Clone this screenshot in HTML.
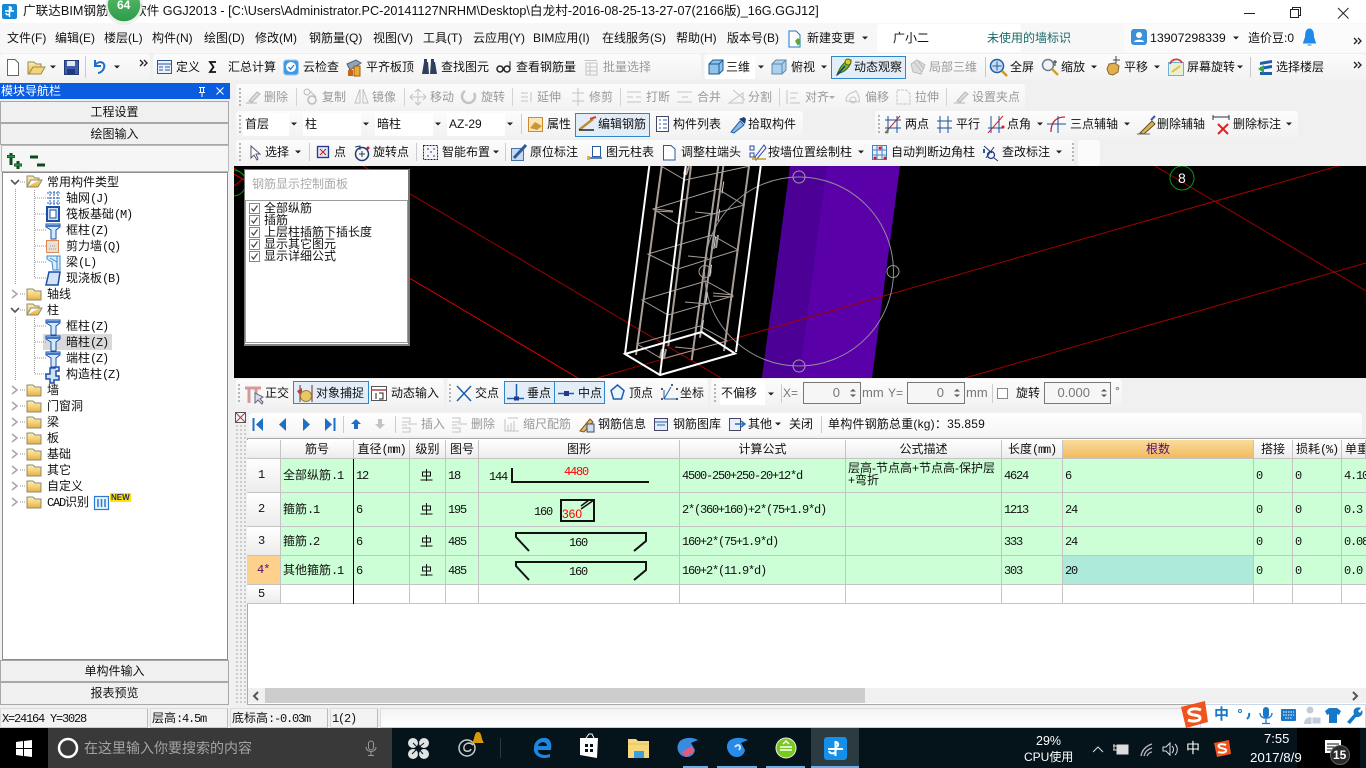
<!DOCTYPE html>
<html lang="zh"><head><meta charset="utf-8"><title>GGJ2013</title>
<style>
html,body{margin:0;padding:0;width:1366px;height:768px;overflow:hidden;background:#f0f0f0}
body{position:relative;font:12px/16px "Liberation Sans","Noto Sans CJK SC",sans-serif;color:#111}
div,i,svg{position:absolute}
i{font-style:normal;white-space:nowrap;height:16px;line-height:16px}
i b,.h b,.d b,.st b{font:12px/16px "Liberation Mono",monospace;letter-spacing:-1.2px}
.bar{background:linear-gradient(#fcfcfc,#f2f2f2);border-radius:3px}
.sel{background:#e2edf8;border:1px solid #2f86c8;box-sizing:border-box}
.cb{background:#fff}
.g{color:#9a9a9a}
.q,.h,.d,.st,.k{font-family:"Liberation Sans","WenQuanYi Zen Hei","Noto Sans CJK SC",sans-serif}
.btn{left:0;width:229px;height:22px;box-sizing:border-box;border:1px solid #a8a8a8;background:#f0f0f0;text-align:center;line-height:21px}
.r0{top:30px}.r1{top:59px}.r2{top:89px}.r3{top:116px}.r4{top:144px}.r5{top:385px}.r6{top:416px}
.c{left:0;top:0}
.h{top:440px;height:19px;box-sizing:border-box;background:linear-gradient(#fff,#ececec);border-right:1px solid #c4c4c4;border-bottom:1px solid #c4c4c4;text-align:center;line-height:19px}
.k{left:247px;width:34px;box-sizing:border-box;background:linear-gradient(#fff,#ececec);border-right:1px solid #c4c4c4;border-bottom:1px solid #c4c4c4;padding-left:11px;font:12px "Liberation Mono",monospace;letter-spacing:-1px}
.d{box-sizing:border-box;background:#ccffd6;border-right:1px solid #c4c4c4;border-bottom:1px solid #c4c4c4;padding-left:2px;white-space:nowrap}
.w{background:#fff}
.sp{top:382px;height:22px;box-sizing:border-box;border:1px solid #777;background:#f6f6f6;color:#777;text-align:right;line-height:20px;padding-right:20px;font-size:13px}
.st{top:708px;height:20px;box-sizing:border-box;background:#f3f3f3;border:1px solid #dcdcdc;border-right-color:#bbb;border-bottom-color:#ccc;line-height:18px;padding-left:1px;white-space:nowrap}
.st b{line-height:18px}
.cp{left:264px;height:12px;line-height:12px;font-size:12px}
</style></head><body>

<!-- title -->
<div style="left:0;top:0;width:1366px;height:23px;background:#fff"></div>
<i style="left:23px;top:3px;font-size:12.65px">广联达BIM钢筋算量软件 GGJ2013 - [C:\Users\Administrator.PC-20141127NRHM\Desktop\白龙村-2016-08-25-13-27-07(2166版)_16G.GGJ12]</i>

<!-- menu -->
<div style="left:0;top:23px;width:1366px;height:30px;background:#f7f7f7"></div>
<div style="left:877px;top:24px;width:144px;height:28px;background:#fff;border-radius:3px"></div>
<div style="left:1124px;top:24px;width:242px;height:28px;background:#fbfbfb;border-radius:3px"></div>
<i class="r0" style="left:7px">文件(F)</i><i class="r0" style="left:55px">编辑(E)</i><i class="r0" style="left:104px">楼层(L)</i><i class="r0" style="left:152px">构件(N)</i><i class="r0" style="left:204px">绘图(D)</i><i class="r0" style="left:255px">修改(M)</i><i class="r0" style="left:309px">钢筋量(Q)</i><i class="r0" style="left:373px">视图(V)</i><i class="r0" style="left:423px">工具(T)</i><i class="r0" style="left:473px">云应用(Y)</i><i class="r0" style="left:533px">BIM应用(I)</i><i class="r0" style="left:602px">在线服务(S)</i><i class="r0" style="left:676px">帮助(H)</i><i class="r0" style="left:727px">版本号(B)</i><i class="r0" style="left:807px">新建变更</i><i class="r0" style="left:893px">广小二</i><i class="r0" style="left:987px;color:#1a6a6a">未使用的墙标识</i><i class="r0" style="left:1150px;font-size:12.4px">13907298339</i><i class="r0" style="left:1248px">造价豆:0</i>

<!-- toolbars bg -->
<div class="bar" style="left:0;top:54px;width:150px;height:26px"></div>
<div class="bar" style="left:153px;top:54px;width:548px;height:26px"></div>
<div class="bar" style="left:704px;top:54px;width:662px;height:26px"></div>
<div class="cb" style="left:705px;top:56px;width:50px;height:23px"></div>
<div class="sel" style="left:831px;top:56px;width:75px;height:23px"></div>
<i class="r1" style="left:176px">定义</i><i class="r1" style="left:228px">汇总计算</i><i class="r1" style="left:303px">云检查</i><i class="r1" style="left:366px">平齐板顶</i><i class="r1" style="left:441px">查找图元</i><i class="r1" style="left:516px">查看钢筋量</i><i class="r1 g" style="left:603px">批量选择</i><i class="r1" style="left:726px">三维</i><i class="r1" style="left:791px">俯视</i><i class="r1" style="left:854px">动态观察</i><i class="r1 g" style="left:929px">局部三维</i><i class="r1" style="left:1010px">全屏</i><i class="r1" style="left:1061px">缩放</i><i class="r1" style="left:1124px">平移</i><i class="r1" style="left:1187px">屏幕旋转</i><i class="r1" style="left:1276px">选择楼层</i>

<!-- nav panel -->
<div style="left:0;top:83px;width:230px;height:16px;background:#0a5de0"></div>
<i style="left:1px;top:83px;color:#fff">模块导航栏</i>
<div class="btn" style="top:101px">工程设置</div>
<div class="btn" style="top:123px">绘图输入</div>
<div style="left:1px;top:145px;width:228px;height:27px;background:#f6f6f6;border:1px solid #bbb;box-sizing:border-box"></div>
<div style="left:2px;top:172px;width:226px;height:488px;background:#fff;border:1px solid #8c8c8c;box-sizing:border-box"></div>
<div style="left:43px;top:334px;width:69px;height:16px;background:#d9d9d9"></div>
<div class="q" style="left:0;top:0">
<i style="left:47px;top:174px">常用构件类型</i>
<i style="left:66px;top:190px">轴网<b>(J)</b></i>
<i style="left:66px;top:206px">筏板基础<b>(M)</b></i>
<i style="left:66px;top:222px">框柱<b>(Z)</b></i>
<i style="left:66px;top:238px">剪力墙<b>(Q)</b></i>
<i style="left:66px;top:254px">梁<b>(L)</b></i>
<i style="left:66px;top:270px">现浇板<b>(B)</b></i>
<i style="left:47px;top:286px">轴线</i>
<i style="left:47px;top:302px">柱</i>
<i style="left:66px;top:318px">框柱<b>(Z)</b></i>
<i style="left:66px;top:334px">暗柱<b>(Z)</b></i>
<i style="left:66px;top:350px">端柱<b>(Z)</b></i>
<i style="left:66px;top:366px">构造柱<b>(Z)</b></i>
<i style="left:47px;top:382px">墙</i><i style="left:47px;top:398px">门窗洞</i><i style="left:47px;top:414px">梁</i><i style="left:47px;top:430px">板</i><i style="left:47px;top:446px">基础</i><i style="left:47px;top:462px">其它</i><i style="left:47px;top:478px">自定义</i>
<i style="left:47px;top:494px"><b>CAD</b>识别</i>
</div>
<div class="btn" style="top:660px">单构件输入</div>
<div class="btn" style="top:682px;height:23px">报表预览</div>

<!-- edit bars -->
<div class="bar" style="left:236px;top:84px;width:789px;height:26px"></div>
<i class="r2 g" style="left:264px">删除</i><i class="r2 g" style="left:322px">复制</i><i class="r2 g" style="left:372px">镜像</i><i class="r2 g" style="left:430px">移动</i><i class="r2 g" style="left:481px">旋转</i><i class="r2 g" style="left:537px">延伸</i><i class="r2 g" style="left:589px">修剪</i><i class="r2 g" style="left:646px">打断</i><i class="r2 g" style="left:697px">合并</i><i class="r2 g" style="left:748px">分割</i><i class="r2 g" style="left:805px">对齐</i><i class="r2 g" style="left:865px">偏移</i><i class="r2 g" style="left:915px">拉伸</i><i class="r2 g" style="left:972px">设置夹点</i>

<div class="bar" style="left:236px;top:111px;width:567px;height:27px"></div>
<div class="bar" style="left:875px;top:111px;width:423px;height:27px"></div>
<div class="cb" style="left:243px;top:113px;width:46px;height:23px"></div>
<div class="cb" style="left:303px;top:113px;width:58px;height:23px"></div>
<div class="cb" style="left:375px;top:113px;width:58px;height:23px"></div>
<div class="cb" style="left:447px;top:113px;width:58px;height:23px"></div>
<div class="sel" style="left:575px;top:113px;width:75px;height:24px"></div>
<i class="r3" style="left:245px">首层</i><i class="r3" style="left:305px">柱</i><i class="r3" style="left:377px">暗柱</i><i class="r3" style="left:449px">AZ-29</i><i class="r3" style="left:547px">属性</i><i class="r3" style="left:598px">编辑钢筋</i><i class="r3" style="left:673px">构件列表</i><i class="r3" style="left:748px">拾取构件</i><i class="r3" style="left:905px">两点</i><i class="r3" style="left:956px">平行</i><i class="r3" style="left:1007px">点角</i><i class="r3" style="left:1070px">三点辅轴</i><i class="r3" style="left:1157px">删除辅轴</i><i class="r3" style="left:1233px">删除标注</i>

<div class="bar" style="left:236px;top:140px;width:838px;height:26px"></div>
<div class="bar" style="left:1078px;top:140px;width:22px;height:26px;background:#fbfbfb"></div>
<i class="r4" style="left:265px">选择</i><i class="r4" style="left:334px">点</i><i class="r4" style="left:373px">旋转点</i><i class="r4" style="left:442px">智能布置</i><i class="r4" style="left:530px">原位标注</i><i class="r4" style="left:606px">图元柱表</i><i class="r4" style="left:681px">调整柱端头</i><i class="r4" style="left:768px">按墙位置绘制柱</i><i class="r4" style="left:891px">自动判断边角柱</i><i class="r4" style="left:1002px">查改标注</i>

<!-- canvas -->
<div style="left:234px;top:166px;width:1132px;height:212px;background:#000;overflow:hidden">
<svg class="c" width="1132" height="212" viewBox="234 166 1132 212" fill="none">
<polygon points="790,166 900,166 872,378 762,378" fill="#5a00a8"/>
<polygon points="790,166 827,166 799,378 762,378" fill="#4c0096"/>
<g stroke="#e00000"><path d="M234 174L578 378"/></g>
<g stroke="#a00000"><path d="M363 166L721 378M597 378L1366 158M965 378L1366 263M1155 166L1366 291"/></g>
<path d="M234 168L244 175M234 186L244 178" stroke="#c00000"/>
<circle cx="233" cy="183" r="13" stroke="#0a9a0a"/>
<circle cx="1182" cy="178" r="12" stroke="#0a9a0a"/>
<circle cx="799" cy="271.5" r="94.5" stroke="#8f8f94"/>
<g stroke="#9a9a9e"><circle cx="799" cy="177" r="6"/><circle cx="893" cy="271.5" r="6"/><circle cx="799" cy="366" r="6"/><circle cx="705" cy="271.5" r="6"/></g>
<g stroke="#a89f98" stroke-width="1">
<path d="M661 166L685 180L750 166"/>
<path d="M653 209L678 224L744 205L718 189Z"/>
<path d="M648 254L678 269L738 250L712 235Z"/>
<path d="M642 300L668 315L733 296L706 281Z"/>
<path d="M637 344L662 359L727 341L700 326Z"/>
<path d="M655 209L673 211M655 211L673 212M695 212L715 214M688 256L708 258M685 302L708 304M713 293L733 295M713 296L733 297M675 347L695 349"/>
</g>
<g stroke="#a89f98" stroke-width="2">
<path d="M636 355L661.7 166M668.3 346L691 166M691.7 360L718.3 166M700 337.700L723.3 166M724 351L749 166"/>
<path d="M660 358L662 349M664 358L666 349M684 174L686 166M686 175L689 166M712 248L714 235M716 248L718 235"/>
</g>
<g stroke="#fff" stroke-width="2">
<path d="M625 354L660 375L735 353.500L701.700 332Z"/>
<path d="M625 354L649.300 166M660 375L685.700 166M736 352L760.700 166"/>
</g>
<path d="M701.700 332L726 166" stroke="#d8d8d8" stroke-width="1" stroke-dasharray="12 16"/>
</svg>
<i style="left:944px;top:4px;color:#fff;font-size:14px;height:16px">8</i>
</div>

<!-- rebar panel -->
<div style="left:244px;top:169px;width:166px;height:177px;background:#fff;border:1px solid #777;border-bottom:2px solid #888;border-right-width:2px;box-sizing:border-box"></div>
<i class="g" style="left:252px;top:176px;color:#aaa">钢筋显示控制面板</i>
<div style="left:245px;top:200px;width:163px;height:143px;border:1px solid #9c9c9c;box-sizing:border-box"></div>
<i class="cp" style="top:202px">全部纵筋</i><i class="cp" style="top:214px">插筋</i><i class="cp" style="top:226px">上层柱插筋下插长度</i><i class="cp" style="top:238px">显示其它图元</i><i class="cp" style="top:250px">显示详细公式</i>

<!-- snap bar -->
<div class="bar" style="left:236px;top:379px;width:208px;height:28px"></div>
<div class="bar" style="left:447px;top:379px;width:261px;height:28px"></div>
<div class="bar" style="left:711px;top:379px;width:411px;height:28px"></div>
<div class="sel" style="left:293px;top:381px;width:76px;height:23px"></div>
<div class="sel" style="left:504px;top:381px;width:51px;height:23px"></div>
<div class="sel" style="left:554px;top:381px;width:51px;height:23px"></div>
<div class="cb" style="left:720px;top:381px;width:45px;height:24px"></div>
<i class="r5" style="left:265px">正交</i><i class="r5" style="left:316px">对象捕捉</i><i class="r5" style="left:391px">动态输入</i><i class="r5" style="left:475px">交点</i><i class="r5" style="left:527px">垂点</i><i class="r5" style="left:578px">中点</i><i class="r5" style="left:629px">顶点</i><i class="r5" style="left:680px">坐标</i><i class="r5" style="left:721px">不偏移</i>
<i class="r5 g" style="left:783px;color:#777">X=</i><i class="r5 g" style="left:862px;color:#777;font-size:13px">mm</i><i class="r5 g" style="left:888px;color:#777">Y=</i><i class="r5 g" style="left:966px;color:#777;font-size:13px">mm</i><i class="r5" style="left:1016px">旋转</i><i class="r5" style="left:1115px;top:383px;color:#555">°</i>
<div class="sp" style="left:803px;width:58px">0</div><div class="sp" style="left:907px;width:58px">0</div><div class="sp" style="left:1044px;width:67px">0.000</div>

<!-- grid toolbar -->
<div style="left:234px;top:411px;width:13px;height:294px;background:#f0f0f0;background-image:radial-gradient(#c9c9c9 1px,transparent 1.2px);background-size:4px 4px;background-position:1px 1px"></div>
<div class="bar" style="left:249px;top:413px;width:1113px;height:23px;background:linear-gradient(#fefefe,#f6f6f6)"></div>
<i class="r6 g" style="left:421px">插入</i><i class="r6 g" style="left:471px">删除</i><i class="r6 g" style="left:523px">缩尺配筋</i><i class="r6" style="left:598px">钢筋信息</i><i class="r6" style="left:673px">钢筋图库</i><i class="r6" style="left:748px">其他</i><i class="r6" style="left:789px">关闭</i><i class="r6" style="left:828px;letter-spacing:.2px">单构件钢筋总重(kg)：35.859</i>

<!-- grid -->
<div style="left:247px;top:438px;width:1119px;height:267px;background:#fff;border:1px solid #a8a8a8;border-right:0;box-sizing:border-box"></div>
<div class="h" style="left:247px;width:34px"></div>
<div class="h" style="left:281px;width:73px">筋号</div>
<div class="h" style="left:354px;width:56px">直径<b>(mm)</b></div>
<div class="h" style="left:410px;width:36px">级别</div>
<div class="h" style="left:446px;width:33px">图号</div>
<div class="h" style="left:479px;width:201px">图形</div>
<div class="h" style="left:680px;width:166px">计算公式</div>
<div class="h" style="left:846px;width:156px">公式描述</div>
<div class="h" style="left:1002px;width:61px">长度<b>(mm)</b></div>
<div class="h" style="left:1063px;width:191px;background:linear-gradient(#fadb9f,#f1bb5c);color:#5a0a70">根数</div>
<div class="h" style="left:1254px;width:39px">搭接</div>
<div class="h" style="left:1293px;width:49px">损耗<b>(%)</b></div>
<div class="h" style="left:1342px;width:24px;text-align:left;padding-left:3px;overflow:hidden;white-space:nowrap">单重</div>

<div class="k" style="top:459px;height:34px;line-height:33px">1</div>
<div class="d" style="left:281px;top:459px;width:73px;height:34px;line-height:33px">全部纵筋<b>.1</b></div>
<div class="d" style="left:354px;top:459px;width:56px;height:34px;line-height:33px"><b>12</b></div>
<div class="d" style="left:410px;top:459px;width:36px;height:34px"></div>
<div class="d" style="left:446px;top:459px;width:33px;height:34px;line-height:33px"><b>18</b></div>
<div class="d" style="left:479px;top:459px;width:201px;height:34px"></div>
<div class="d" style="left:680px;top:459px;width:166px;height:34px;line-height:33px"><b>4500-250+250-20+12*d</b></div>
<div class="d" style="left:846px;top:459px;width:156px;height:34px;line-height:12px;white-space:normal;padding-top:3px">层高-节点高+节点高-保护层+弯折</div>
<div class="d" style="left:1002px;top:459px;width:61px;height:34px;line-height:33px"><b>4624</b></div>
<div class="d" style="left:1063px;top:459px;width:191px;height:34px;line-height:33px"><b>6</b></div>
<div class="d" style="left:1254px;top:459px;width:39px;height:34px;line-height:33px"><b>0</b></div>
<div class="d" style="left:1293px;top:459px;width:49px;height:34px;line-height:33px"><b>0</b></div>
<div class="d" style="left:1342px;top:459px;width:24px;height:34px;line-height:33px;overflow:hidden;border-right:0"><b>4.10</b></div>

<div class="k" style="top:493px;height:34px;line-height:33px">2</div>
<div class="d" style="left:281px;top:493px;width:73px;height:34px;line-height:33px">箍筋<b>.1</b></div>
<div class="d" style="left:354px;top:493px;width:56px;height:34px;line-height:33px"><b>6</b></div>
<div class="d" style="left:410px;top:493px;width:36px;height:34px"></div>
<div class="d" style="left:446px;top:493px;width:33px;height:34px;line-height:33px"><b>195</b></div>
<div class="d" style="left:479px;top:493px;width:201px;height:34px"></div>
<div class="d" style="left:680px;top:493px;width:166px;height:34px;line-height:33px"><b>2*(360+160)+2*(75+1.9*d)</b></div>
<div class="d" style="left:846px;top:493px;width:156px;height:34px"></div>
<div class="d" style="left:1002px;top:493px;width:61px;height:34px;line-height:33px"><b>1213</b></div>
<div class="d" style="left:1063px;top:493px;width:191px;height:34px;line-height:33px"><b>24</b></div>
<div class="d" style="left:1254px;top:493px;width:39px;height:34px;line-height:33px"><b>0</b></div>
<div class="d" style="left:1293px;top:493px;width:49px;height:34px;line-height:33px"><b>0</b></div>
<div class="d" style="left:1342px;top:493px;width:24px;height:34px;line-height:33px;overflow:hidden;border-right:0"><b>0.3</b></div>

<div class="k" style="top:527px;height:29px;line-height:28px">3</div>
<div class="d" style="left:281px;top:527px;width:73px;height:29px;line-height:28px">箍筋<b>.2</b></div>
<div class="d" style="left:354px;top:527px;width:56px;height:29px;line-height:28px"><b>6</b></div>
<div class="d" style="left:410px;top:527px;width:36px;height:29px"></div>
<div class="d" style="left:446px;top:527px;width:33px;height:29px;line-height:28px"><b>485</b></div>
<div class="d" style="left:479px;top:527px;width:201px;height:29px"></div>
<div class="d" style="left:680px;top:527px;width:166px;height:29px;line-height:28px"><b>160+2*(75+1.9*d)</b></div>
<div class="d" style="left:846px;top:527px;width:156px;height:29px"></div>
<div class="d" style="left:1002px;top:527px;width:61px;height:29px;line-height:28px"><b>333</b></div>
<div class="d" style="left:1063px;top:527px;width:191px;height:29px;line-height:28px"><b>24</b></div>
<div class="d" style="left:1254px;top:527px;width:39px;height:29px;line-height:28px"><b>0</b></div>
<div class="d" style="left:1293px;top:527px;width:49px;height:29px;line-height:28px"><b>0</b></div>
<div class="d" style="left:1342px;top:527px;width:24px;height:29px;line-height:28px;overflow:hidden;border-right:0"><b>0.08</b></div>

<div class="k" style="top:556px;height:29px;line-height:28px;background:#fdd08c;color:#5a0a70;padding-left:10px">4*</div>
<div class="d" style="left:281px;top:556px;width:73px;height:29px;line-height:28px">其他箍筋<b>.1</b></div>
<div class="d" style="left:354px;top:556px;width:56px;height:29px;line-height:28px"><b>6</b></div>
<div class="d" style="left:410px;top:556px;width:36px;height:29px"></div>
<div class="d" style="left:446px;top:556px;width:33px;height:29px;line-height:28px"><b>485</b></div>
<div class="d" style="left:479px;top:556px;width:201px;height:29px"></div>
<div class="d" style="left:680px;top:556px;width:166px;height:29px;line-height:28px"><b>160+2*(11.9*d)</b></div>
<div class="d" style="left:846px;top:556px;width:156px;height:29px"></div>
<div class="d" style="left:1002px;top:556px;width:61px;height:29px;line-height:28px"><b>303</b></div>
<div class="d" style="left:1063px;top:556px;width:191px;height:29px;line-height:28px;background:#aeeada"><b>20</b></div>
<div class="d" style="left:1254px;top:556px;width:39px;height:29px;line-height:28px"><b>0</b></div>
<div class="d" style="left:1293px;top:556px;width:49px;height:29px;line-height:28px"><b>0</b></div>
<div class="d" style="left:1342px;top:556px;width:24px;height:29px;line-height:28px;overflow:hidden;border-right:0"><b>0.0</b></div>

<div class="k" style="top:585px;height:19px;line-height:18px">5</div>
<div class="d w" style="left:281px;top:585px;width:73px;height:19px"></div><div class="d w" style="left:354px;top:585px;width:56px;height:19px"></div><div class="d w" style="left:410px;top:585px;width:36px;height:19px"></div><div class="d w" style="left:446px;top:585px;width:33px;height:19px"></div><div class="d w" style="left:479px;top:585px;width:201px;height:19px"></div><div class="d w" style="left:680px;top:585px;width:166px;height:19px"></div><div class="d w" style="left:846px;top:585px;width:156px;height:19px"></div><div class="d w" style="left:1002px;top:585px;width:61px;height:19px"></div><div class="d w" style="left:1063px;top:585px;width:191px;height:19px"></div><div class="d w" style="left:1254px;top:585px;width:39px;height:19px"></div><div class="d w" style="left:1293px;top:585px;width:49px;height:19px"></div><div class="d w" style="left:1342px;top:585px;width:24px;height:19px;border-right:0"></div>
<div style="left:353px;top:459px;width:1px;height:145px;background:#000"></div>

<i style="left:489px;top:468px"><b>144</b></i><i style="left:564px;top:463px;color:#f00"><b>4480</b></i>
<i style="left:534px;top:503px"><b>160</b></i><i style="left:562px;top:506px;color:#f00;font-size:12px">360</i>
<i style="left:569px;top:534px"><b>160</b></i><i style="left:569px;top:563px"><b>160</b></i>

<!-- scrollbar -->
<div style="left:248px;top:688px;width:1118px;height:15px;background:#f0f0f0"></div>
<div style="left:265px;top:688px;width:600px;height:15px;background:#cdcdcd"></div>

<!-- status -->
<div style="left:0;top:705px;width:1366px;height:23px;background:#f0f0f0"></div>
<div class="st" style="left:0;width:148px"><b>X=24164 Y=3028</b></div>
<div class="st" style="left:150px;width:78px">层高<b>:4.5m</b></div>
<div class="st" style="left:230px;width:98px">底标高<b>:-0.03m</b></div>
<div class="st" style="left:330px;width:48px"><b>1(2)</b></div>
<div class="st" style="left:380px;width:986px;background:linear-gradient(#f3f3f3,#fff)"></div>

<!-- sogou bar -->
<div style="left:1200px;top:704px;width:166px;height:24px;background:#fff;border:1px solid #c9d8e8;box-sizing:border-box"></div>
<i style="left:1214px;top:707px;color:#1a78c8;font-size:15px;font-weight:bold">中</i>

<!-- taskbar -->
<div style="left:0;top:728px;width:1366px;height:40px;background:#05131b"></div>
<div style="left:0;top:728px;width:48px;height:40px;background:#000"></div>
<div style="left:48px;top:728px;width:344px;height:40px;background:#393939"></div>
<div style="left:811px;top:728px;width:48px;height:40px;background:#2c3a42"></div>
<div style="left:1297px;top:728px;width:63px;height:40px;background:#000"></div>
<div style="left:683px;top:766px;width:25px;height:2px;background:#6ab0e8"></div>
<div style="left:717px;top:766px;width:40px;height:2px;background:#6ab0e8"></div>
<div style="left:766px;top:766px;width:39px;height:2px;background:#6ab0e8"></div>
<div style="left:811px;top:766px;width:48px;height:2px;background:#6ab0e8"></div>
<i style="left:84px;top:740px;color:#a3a3a3;font-size:14px">在这里输入你要搜索的内容</i>
<i style="left:1036px;top:733px;color:#fff;font-size:12.5px">29%</i><i style="left:1024px;top:749px;color:#fff">CPU使用</i>
<i style="left:1186px;top:740px;color:#fff;font-size:14px">中</i>
<i style="left:1264px;top:731px;color:#fff;font-size:13px">7:55</i><i style="left:1250px;top:750px;color:#fff;font-size:13.3px">2017/8/9</i>

<!-- icon overlay -->
<svg class="c" width="1366" height="768" viewBox="0 0 1366 768" fill="none" style="pointer-events:none">
<defs>
<linearGradient id="fo" x1="0" y1="0" x2="0" y2="1"><stop offset="0" stop-color="#fdf0b8"/><stop offset="1" stop-color="#e8b23c"/></linearGradient>
<linearGradient id="gr" x1="0" y1="0" x2="0" y2="1"><stop offset="0" stop-color="#5cc06a"/><stop offset="1" stop-color="#2c9a4a"/></linearGradient>
<g id="tri"><path d="M-3 -1.500H3L0 1.500Z" fill="#222"/></g>
<g id="folder"><path d="M1 2H7L9 4H15V13H1Z" fill="url(#fo)" stroke="#8f8a70"/></g>
<g id="ofolder"><path d="M1 13V2H7L9 4H13V6H5L1 13H12L16 6H13" fill="url(#fo)" stroke="#8f8a70"/></g>
<g id="col"><path d="M1 1H15V4L11 7V16H6V7L1 4Z" fill="#d8e8f8" stroke="#1b4fa8"/><path d="M1 3H15" stroke="#3a78d0" stroke-width="2"/></g>
<g id="chevR"><path d="M-2 -4L3 0L-2 4" stroke="#a8a8a8" stroke-width="1.600"/></g>
<g id="chevD"><path d="M-4 -2L0 2L4 -2" stroke="#555" stroke-width="1.600"/></g>
<g id="cube"><path d="M1 5L5 1H15V11L11 15H1Z M1 5H11V15 M11 5L15 1" fill="#8fc3ea" stroke="#1d5a92"/></g>
<g id="chk"><rect x=".5" y=".5" width="10" height="10" fill="#fff" stroke="#888"/><path d="M2.500 5.500L4.500 8L8.500 2.500" stroke="#444" stroke-width="1.200"/></g>
<g id="gf"><path d="M1 14H12M4 12L12 3L15 5L7 13Z" stroke="#b5b5b5" fill="#dedede"/></g>
<g id="sp"><path d="M-3 -1.500L0 -4L3 -1.500Z" fill="#555"/><path d="M-3 1.500L0 4L3 1.500Z" fill="#555"/></g>
<g id="grip"><path d="M0 0V18" stroke="#b5b5b5" stroke-width="2" stroke-dasharray="2 2"/></g>
<g id="hrb"><path d="M-6 5H6M0 -6V6M-4 1V-3H4V1Z" stroke="#111"/></g>
</defs>

<!-- title: logo, badge, win buttons -->
<rect x="2" y="4" width="15" height="15" rx="2" fill="#1588d8"/>
<path d="M9.500 6V17M5 11H14M9.500 7C12 7 12 10 9.500 10M6 13C6 15 9 15 9.500 14" stroke="#fff" stroke-width="1.500"/>
<circle cx="124" cy="6" r="19" fill="#dfe8e0" opacity=".55"/>
<circle cx="124" cy="5" r="17" fill="url(#gr)" stroke="#e8f0ea" stroke-width="1.500"/>
<path d="M1244 13.500H1255" stroke="#222"/>
<path d="M1290.500 9.500H1298.500V17.500H1290.500ZM1292.500 9.500V7.500H1300.500V15.500H1298.500" stroke="#222"/>
<path d="M1338 8L1348.500 18.500M1348.500 8L1338 18.500" stroke="#222"/>

<!-- menu icons -->
<path d="M789 31H796L800 35V47H789Z" fill="#fff" stroke="#1a78c8"/><path d="M795 41L798 38L801 41L798 46Z" fill="#5aa83a"/>
<use href="#tri" x="865" y="38"/><use href="#tri" x="1236" y="38"/>
<rect x="1131" y="29" width="16" height="16" rx="3" fill="#3d8fd8"/><circle cx="1139" cy="35" r="3" fill="#fff"/><path d="M1134 42H1144C1144 39 1134 39 1134 42Z" fill="#fff"/>
<path d="M1309.500 29C1306 29 1305.500 33 1305.500 37L1303.500 43H1315.500L1313.500 37C1313.500 33 1313 29 1309.500 29ZM1307.500 45H1311.500" fill="#1f8ae8" stroke="#1f8ae8"/>
<path d="M1354 38L1357 41L1354 44M1358 38L1361 41L1358 44" stroke="#222" stroke-width="1.300"/>

<!-- row1 -->
<path d="M7.500 59.500H15L18.500 63V75.500H7.500Z" fill="#fff" stroke="#666"/>
<path d="M28 62H34L36 64H41V74H28Z" fill="url(#fo)" stroke="#9c8a50"/><path d="M29 74L33 67H45L41 74Z" fill="#f4d57c" stroke="#9c8a50"/>
<use href="#tri" x="53" y="67"/>
<rect x="64.500" y="60.500" width="14" height="14" fill="#3c5fb0" stroke="#223a78"/><rect x="67" y="61" width="8" height="5" fill="#e8e8e8"/><rect x="67" y="69" width="8" height="5" fill="#223a78"/>
<path d="M85.500 56V78" stroke="#ccc"/>
<path d="M95 60V66H101M95 65C99 60 106 62 104 68C103 71 100 73 98 73" stroke="#1f6fc8" stroke-width="2"/>
<use href="#tri" x="117" y="67"/>
<path d="M140 60L143 63L140 66M144 60L147 63L144 66" stroke="#222" stroke-width="1.300"/>
<rect x="157.500" y="60.500" width="14" height="13" fill="#eaf2fb" stroke="#2a5a9c"/><path d="M157 64H172M159 67H163M159 70H163M165 67H170M165 70H170" stroke="#2a5a9c"/>
<path d="M216 62H210L213.500 67L210 72H216" stroke="#111" stroke-width="1.800"/>
<rect x="283.500" y="60" width="15" height="15" rx="3" fill="#3d9ae8" stroke="#9ccaf0"/><circle cx="291" cy="67" r="5" fill="#fff"/><path d="M288.500 67L290.500 69.500L294 65" stroke="#2a7ac8" stroke-width="1.300"/>
<path d="M347 64L356 60L361 63L350 70Z" fill="#8fa4b8" stroke="#4a6078"/><rect x="348" y="70" width="5" height="6" fill="#c86414"/><rect x="354" y="66" width="6" height="10" fill="#e8a83c" stroke="#a05810"/>
<path d="M422 74L424 62H428L429 74ZM430 74L431 62H435L437 74Z" fill="#2f3f5c"/><rect x="424" y="59" width="3" height="4" fill="#2f3f5c"/><rect x="431" y="59" width="3" height="4" fill="#2f3f5c"/>
<circle cx="500" cy="69" r="3" stroke="#222" stroke-width="1.500"/><circle cx="507" cy="69" r="3" stroke="#222" stroke-width="1.500"/><path d="M503 68H504M510 68V61" stroke="#222"/>
<path d="M584.500 60.500H597M586 63H597V75H586ZM586 67H597M586 71H597M590 63V75" stroke="#c4c4c4"/>
<use href="#cube" x="708" y="59"/><use href="#tri" x="761" y="67"/>
<use href="#cube" x="771" y="59" opacity=".7"/><use href="#tri" x="824" y="67"/>
<path d="M837 75C840 66 845 61 851 60C851 66 846 71 840 73Z" fill="#6cb82c" stroke="#2a6a1c"/><circle cx="848" cy="62" r="3" fill="#d8d020" stroke="#606010"/><path d="M837 75L845 66" stroke="#1a3a78" stroke-width="1.500"/>
<path d="M911 64L917 60L925 65L921 74L913 72Z" fill="#ddd" stroke="#bbb"/><path d="M914 62L922 72M918 61L924 69" stroke="#bbb"/>
<path d="M985.500 57V77" stroke="#c8c8c8"/>
<circle cx="997" cy="66" r="6.500" fill="#c8dcf4" stroke="#1d5fa8" stroke-width="1.500"/><path d="M997 61.500V70.500M992.500 66H1001.500" stroke="#1d5fa8"/><path d="M1002 71L1007 76" stroke="#c89a28" stroke-width="2.500"/>
<circle cx="1048" cy="65" r="5.500" fill="#eef4fa" stroke="#6a7a90" stroke-width="1.500"/><path d="M1052 69L1058 75" stroke="#c8a428" stroke-width="2.500"/><path d="M1055 60V66M1053 62H1057" stroke="#333"/>
<use href="#tri" x="1094" y="67"/>
<path d="M1107 69L1109 64L1115 63L1119 66L1118 72L1113 75L1109 74Z" fill="#e0b050" stroke="#8a6420"/><path d="M1116 56V63M1113 60H1120" stroke="#445"/>
<use href="#tri" x="1157" y="67"/>
<rect x="1168.500" y="62.500" width="15" height="13" fill="#e8f0d8" stroke="#6ab0d8"/><path d="M1170 64C1172 58 1180 58 1182 63" stroke="#d84030" stroke-width="1.800"/><path d="M1172 72L1180 66" stroke="#e8c030" stroke-width="2"/>
<use href="#tri" x="1240" y="67"/>
<path d="M1250.500 57V77" stroke="#c8c8c8"/>
<path d="M1260 62L1272 60V63L1260 65ZM1260 67L1272 65V68L1260 70ZM1260 72H1272V75H1260Z" fill="#1d5fa8"/><path d="M1258 69L1264 65V73Z" fill="#3aa83a"/>
<path d="M1354 62L1357 65L1354 68M1358 62L1361 65L1358 68" stroke="#222" stroke-width="1.300"/>

<!-- nav panel -->
<path d="M199 87.500H205M200.500 87.500V92.500H203.500V87.500M199 92.500H205M202 93V97" stroke="#fff"/>
<path d="M216.500 87.500L223.500 94.500M223.500 87.500L216.500 94.500" stroke="#fff"/>
<path d="M11 153V165M7 156.500H15M18 161V169M14 165H22" stroke="#104a20" stroke-width="3"/><path d="M7.500 156.500H14.500M14.500 165H21.500" stroke="#2a9a4a" stroke-width="1.500"/>
<path d="M30 157H38M37 165H45" stroke="#104a20" stroke-width="3"/>
<!-- tree -->
<g stroke="#9a9a9a" stroke-dasharray="1 1">
<path d="M15.500 189V285M15.500 317V381M34.500 190V278M34.500 318V374"/>
<path d="M20 182H26M20 294H26M20 310H26M20 390H26M20 406H26M20 422H26M20 438H26M20 454H26M20 470H26M20 486H26M20 502H26"/>
<path d="M35 198H46M35 214H46M35 230H46M35 246H46M35 262H46M35 278H46M35 326H46M35 342H46M35 358H46M35 374H46"/>
</g>
<use href="#chevD" x="15" y="182"/><use href="#chevD" x="15" y="310"/>
<use href="#chevR" x="14" y="294"/><use href="#chevR" x="14" y="390"/><use href="#chevR" x="14" y="406"/><use href="#chevR" x="14" y="422"/><use href="#chevR" x="14" y="438"/><use href="#chevR" x="14" y="454"/><use href="#chevR" x="14" y="470"/><use href="#chevR" x="14" y="486"/><use href="#chevR" x="14" y="502"/>
<use href="#ofolder" x="26" y="174"/><use href="#ofolder" x="26" y="302"/>
<use href="#folder" x="26" y="287"/><use href="#folder" x="26" y="383"/><use href="#folder" x="26" y="399"/><use href="#folder" x="26" y="415"/><use href="#folder" x="26" y="431"/><use href="#folder" x="26" y="447"/><use href="#folder" x="26" y="463"/><use href="#folder" x="26" y="479"/><use href="#folder" x="26" y="495"/>
<path d="M47 193H60M47 198H60M47 203H60M50 191V205M54 191V205M58 191V205" stroke="#2a62b8" stroke-dasharray="2 1"/>
<rect x="47" y="207" width="12" height="14" fill="#cfe0f4" stroke="#1b4fa8" stroke-width="2"/><rect x="50" y="210" width="6" height="8" fill="#fff" stroke="#1b4fa8"/>
<use href="#col" x="45" y="223"/>
<rect x="46.500" y="240.500" width="12" height="12" fill="#e8e0d0" stroke="#e08858"/><path d="M49 249H56M50 246H55" stroke="#999" stroke-dasharray="1 1"/>
<path d="M47 256H60V270H53L52 262L47 259Z" fill="#dcecf8" stroke="#3a8ad0"/><path d="M50 258L57 262M57 256V270" stroke="#3a8ad0"/>
<path d="M49 272H60L58 285H46Z" fill="#d4e4f8" stroke="#1b4fa8" stroke-width="1.500"/>
<use href="#col" x="45" y="319"/><use href="#col" x="45" y="335"/><use href="#col" x="45" y="351"/>
<path d="M50 368H55V367H59V371H56V376H59V380H54V383H50V379H46V374H50Z" fill="#cfe0f4" stroke="#1b4fa8" stroke-width="1.500"/>
<rect x="94.500" y="496.500" width="14" height="13" fill="#e8f2fc" stroke="#2a7ad0" stroke-width="1.200"/><path d="M98 499V507M101.500 499V507M105 499V507" stroke="#2a7ad0" stroke-width="1.500"/>

<!-- row2 icons -->
<use href="#grip" x="240" y="88"/>
<use href="#gf" x="245" y="89"/>
<circle cx="307" cy="92" r="3" stroke="#bbb"/><circle cx="312" cy="100" r="4" stroke="#bbb" stroke-width="1.500"/><path d="M310 91L316 97" stroke="#bbb"/>
<path d="M355 103L360 89V103ZM363 89L368 103H363Z" stroke="#c0c0c0"/>
<path d="M418 89V105M410 97H426M418 89L415 92M418 89L421 92M418 105L415 102M418 105L421 102M410 97L413 94M410 97L413 100M426 97L423 94M426 97L423 100" stroke="#c4c4c4"/>
<path d="M465 91A6.500 6.500 0 1 0 474 93" stroke="#c4c4c4" stroke-width="2.500"/>
<path d="M521 93H528M521 97H528M521 101H528M531 92V102" stroke="#c4c4c4"/>
<path d="M572 93H584M572 101H584M578 88V106" stroke="#c4c4c4"/>
<path d="M627 92H641M627 102H641M627 97H633M636 97H641" stroke="#c4c4c4"/>
<path d="M677 92H692M677 102H692M682 97H688" stroke="#c4c4c4"/>
<path d="M729 103L743 93V103ZM733 90L745 100" stroke="#c4c4c4"/>
<path d="M787 90V104M790 93H798M790 98H796M790 103H800" stroke="#c4c4c4"/>
<path d="M829 96H835L832 99Z" fill="#aaa"/>
<path d="M846 101C846 92 856 92 856 91C859 95 860 100 859 102Z" stroke="#c4c4c4"/><circle cx="853" cy="100" r="3" stroke="#c4c4c4"/>
<path d="M897 90H906L910 94V104H897Z" stroke="#c4c4c4" stroke-dasharray="3 1"/>
<use href="#gf" x="953" y="89"/>
<g stroke="#d4d4d4"><path d="M296.500 88V106M404.500 88V106M512.500 88V106M620.500 88V106M779.500 88V106M946.500 88V106"/></g>

<!-- row3 -->
<use href="#grip" x="240" y="115"/>
<use href="#tri" x="294" y="124"/><use href="#tri" x="366" y="124"/><use href="#tri" x="438" y="124"/><use href="#tri" x="510" y="124"/>
<path d="M521.500 114V134" stroke="#ccc"/>
<rect x="528.500" y="117.500" width="14" height="14" fill="#fbe6b8" stroke="#d08a28"/><path d="M530 128L535 122L542 126L537 130Z" fill="#c89838"/>
<path d="M579 130L593 119" stroke="#b8903c" stroke-width="2.500"/><path d="M579 130H594" stroke="#222" stroke-width="1.500"/><path d="M590 119L596 117" stroke="#d84030" stroke-width="2"/>
<rect x="656.500" y="116.500" width="12" height="15" fill="#fff" stroke="#446"/><path d="M659 120H661M659 124H661M659 128H661M663 120H667M663 124H667M663 128H667" stroke="#2a62a8"/>
<path d="M731 132L740 121L744 125L734 133Z" fill="#8ab8e8" stroke="#1d5fa8"/><path d="M739 119L744 117L746 119L745 124Z" fill="#223a78"/>
<use href="#grip" x="879" y="115"/>
<path d="M888 116V133M897 116V133M885 120H901M885 128H901" stroke="#1d4f9c"/><path d="M885 133L900 116" stroke="#b02828"/><circle cx="887" cy="132" r="1.500" fill="#3a9a3a"/>
<path d="M940 116V133M948 116V133M937 121H952M937 128H952" stroke="#1d4f9c"/>
<path d="M991 116V133M999 116V133M988 128H1004" stroke="#1d4f9c"/><path d="M988 133L1003 116" stroke="#d02020"/><circle cx="1003" cy="127" r="1.500" fill="#d02020"/>
<use href="#tri" x="1040" y="124"/>
<path d="M1051 132C1051 122 1056 117 1065 117" stroke="#d02020" stroke-width="1.300"/><path d="M1047 124H1066M1058 116V133" stroke="#1d4f9c"/>
<use href="#tri" x="1127" y="124"/>
<path d="M1140 133L1152 121L1155 124L1144 134Z" fill="#d8b060" stroke="#6a5020"/><path d="M1151 120L1155 116" stroke="#3a5ab0" stroke-width="2"/><path d="M1137 134H1150" stroke="#666"/>
<path d="M1213 117H1229M1213 115V120M1229 115V120" stroke="#333"/><path d="M1218 124L1228 134M1228 124L1218 134" stroke="#e02020" stroke-width="2"/>
<use href="#tri" x="1289" y="124"/>

<!-- row4 -->
<use href="#grip" x="240" y="143"/>
<path d="M251 146V158L254 155L257 160L258 159L256 154H260Z" fill="#fff" stroke="#557"/>
<use href="#tri" x="298" y="152"/>
<path d="M309.500 143V161" stroke="#ccc"/>
<rect x="317.500" y="146.500" width="11" height="11" fill="#dfe6f8" stroke="#223a88" stroke-width="1.300"/><path d="M320 149L326 155M326 149L320 155" stroke="#c02020"/>
<circle cx="362" cy="154" r="6.500" stroke="#223a68" stroke-width="1.500"/><path d="M362 151V157M359 154H365" stroke="#223a68"/><path d="M355 147L360 146V150" stroke="#223a68"/><circle cx="368" cy="148" r="1.500" fill="#c02020"/>
<path d="M416.500 143V161" stroke="#ccc"/>
<rect x="423.500" y="145.500" width="14" height="14" fill="#f4f4f4" stroke="#223" stroke-dasharray="2 1"/><path d="M427 149H429M433 149H435M430 152H432M427 156H429M433 156H435" stroke="#223a88"/>
<use href="#tri" x="496" y="152"/>
<path d="M505.500 143V161" stroke="#ccc"/>
<rect x="511.500" y="148.500" width="12" height="12" fill="#c8d8f0" stroke="#4a70a8"/><path d="M514 158L526 145" stroke="#2a5a9c" stroke-width="3"/>
<path d="M592.500 146.500H600.500V156.500H592.500Z" fill="#fff" stroke="#2a5a9c"/><path d="M588 158H602" stroke="#2a5a9c" stroke-width="1.500"/><rect x="587" y="156" width="3" height="4" fill="#e8b030"/>
<path d="M663.500 145.500H671L675 149V160H663.500Z" fill="#fff" stroke="#2a5a9c"/>
<path d="M750 146H754V150H750ZM750 153H754V157H750ZM756 160L766 148L764 145L755 157Z" stroke="#2a4aa8"/><path d="M752 159H766" stroke="#c89a28" stroke-width="1.500"/>
<use href="#tri" x="861" y="152"/>
<rect x="872.500" y="145.500" width="14" height="14" fill="#e8f0fa" stroke="#4a80c0"/><path d="M877 145V160M882 145V160M872 150H887M872 155H887" stroke="#4a80c0"/><circle cx="875" cy="158" r="1.500" fill="#d02020"/><circle cx="885" cy="158" r="1.500" fill="#d02020"/><circle cx="880" cy="148" r="1.500" fill="#d02020"/>
<circle cx="991" cy="155" r="3.500" stroke="#223a78" stroke-width="1.300"/><path d="M984 146L992 153M994 147L986 158M994 158L998 161" stroke="#223a78"/><path d="M984 149V153" stroke="#1d5fa8" stroke-width="2"/>
<use href="#tri" x="1059" y="152"/>
<use href="#grip" x="1073" y="143"/>

<!-- panel checks -->
<use href="#chk" x="249" y="203"/><use href="#chk" x="249" y="215"/><use href="#chk" x="249" y="227"/><use href="#chk" x="249" y="239"/><use href="#chk" x="249" y="251"/>

<!-- snap bar -->
<use href="#grip" x="239" y="384"/>
<path d="M245 388H261M249 388V403M256 388V395" stroke="#d49a98" stroke-width="3"/><path d="M255 393L255 403L258 400L262 404L263 402L260 399L263 397Z" fill="#dde" stroke="#667"/>
<path d="M300 385V402M312 385V402" stroke="#7a2828"/><path d="M297 391L302 388V398Z" fill="#b84040"/><circle cx="306" cy="396" r="5.500" fill="#e8c866" stroke="#a08030"/>
<rect x="371.500" y="386.500" width="15" height="14" fill="#fff" stroke="#555"/><path d="M371 390H386" stroke="#b84040" stroke-width="1.500"/><path d="M376 393V399M379 393H383V399H379" stroke="#222"/>
<use href="#grip" x="450" y="384"/>
<path d="M457 386L471 401M471 386L457 401" stroke="#1d5fa8" stroke-width="1.500"/>
<path d="M516.500 384V398M507 398.500H524" stroke="#1d5fa8" stroke-width="1.500"/><rect x="514" y="396.500" width="5" height="4" fill="#223a88"/>
<path d="M558 393.500H574" stroke="#1d5fa8" stroke-width="1.500"/><rect x="564" y="391" width="5" height="5" fill="#223a88"/>
<path d="M617.500 385L624 390.500L621.500 399H613.500L611 390.500Z" fill="#eef4fb" stroke="#1d5fa8" stroke-width="1.500"/>
<path d="M664 399L671 387M664 399H677M664 390V399" stroke="#1d5fa8"/><g fill="#223"><circle cx="662" cy="389" r="1"/><circle cx="672" cy="385" r="1"/><circle cx="677" cy="389" r="1"/><circle cx="677" cy="399" r="1"/><circle cx="662" cy="399" r="1"/></g>
<use href="#grip" x="715" y="384"/>
<use href="#tri" x="771" y="394"/>
<path d="M781.500 384V403M992.500 384V403" stroke="#ccc"/>
<use href="#sp" x="853" y="393"/><use href="#sp" x="957" y="393"/><use href="#sp" x="1104" y="393"/>
<rect x="997.500" y="388.500" width="10" height="10" fill="#fff" stroke="#888"/>

<!-- grid toolbar -->
<rect x="235.500" y="412.500" width="10" height="10" fill="#f4f4f4" stroke="#555"/><path d="M236 413L245 422M245 413L236 422" stroke="#a04040"/>
<path d="M253.500 418V431" stroke="#1d6fc8" stroke-width="2"/><path d="M263 418V431L256 424.500Z" fill="#1d6fc8"/>
<path d="M286 418V431L279 424.500Z" fill="#1d6fc8"/>
<path d="M303 418V431L310 424.500Z" fill="#1d6fc8"/>
<path d="M325 418V431L332 424.500Z" fill="#1d6fc8"/><path d="M334.500 418V431" stroke="#1d6fc8" stroke-width="2"/>
<path d="M343.500 416V433" stroke="#ccc"/>
<path d="M356 419L361 424H358V429H354V424H351Z" fill="#1d6fc8"/>
<path d="M380 429L385 424H382V419H378V424H375Z" fill="#c4c4c4"/>
<path d="M395.500 416V433" stroke="#ccc"/>
<path d="M402 418H410V422H402M402 425H407M402 428H410V432H402M408 424H417" stroke="#c4c4c4"/>
<path d="M452 418H460V422H452M452 425H457M452 428H460V432H452M458 424H467" stroke="#c4c4c4"/>
<path d="M505 419V431H519M508 431V425M511 431V423M514 431V421M508 418H518" stroke="#c4c4c4"/>
<path d="M580 431L590 419L593 422L584 432Z" fill="#e8b860" stroke="#7a5820"/><rect x="587" y="424" width="7" height="8" fill="#cfdff0" stroke="#446"/>
<rect x="654.500" y="418.500" width="13" height="12" fill="#e0ecf8" stroke="#446"/><path d="M655 422H667M657 425H665" stroke="#2a62a8"/>
<rect x="729.500" y="418.500" width="11" height="12" fill="#e8f0fa" stroke="#446"/><path d="M735 424H744M741 421L745 424L741 427" stroke="#1d6fc8" stroke-width="1.500"/>
<use href="#tri" x="778" y="424"/>
<path d="M821.500 416V433" stroke="#ccc"/>

<!-- grade symbols -->
<use href="#hrb" x="426.500" y="475"/><use href="#hrb" x="426.500" y="509"/><use href="#hrb" x="426.500" y="541"/><use href="#hrb" x="426.500" y="570"/>

<!-- rebar shapes -->
<path d="M512 468V482H649" stroke="#111" stroke-width="2"/>
<rect x="561" y="500" width="33" height="21" stroke="#111" stroke-width="2"/><path d="M594 500L581 509M589 500L581 506" stroke="#111" stroke-width="1.500"/>
<path d="M529 551L516 537V533H646V541L634 551" stroke="#111" stroke-width="2"/>
<path d="M529 580L516 566V562H646V570L634 580" stroke="#111" stroke-width="2"/>

<!-- scroll arrows -->
<path d="M258 692L254 696L258 700" stroke="#555" stroke-width="2"/>
<path d="M1353 692L1357 696L1353 700" stroke="#555" stroke-width="2"/>

<!-- sogou -->
<path d="M1181 707L1205 701L1208 722L1186 728Z" fill="#f0531c"/>
<path d="M1201 710C1194 707 1187 710 1189 713C1191 716 1200 714 1200 718C1200 721 1193 722 1188 720" stroke="#fff" stroke-width="3"/>
<circle cx="1240" cy="711" r="1.500" stroke="#1a78c8"/><path d="M1249 713C1250 716 1248 718 1247 719" stroke="#1a78c8" stroke-width="2"/>
<rect x="1263" y="707" width="6" height="11" rx="3" fill="#1a78c8"/><path d="M1260 713C1260 720 1272 720 1272 713M1266 719V723M1262 723.500H1270" stroke="#1a78c8" stroke-width="1.300"/>
<rect x="1281" y="709" width="15" height="12" rx="1" fill="#1a78c8"/><path d="M1283 712H1294M1283 715H1294M1285 718H1292" stroke="#fff" stroke-dasharray="1.500 1"/>
<circle cx="1310" cy="710" r="3.500" fill="#c0ccd8"/><path d="M1304 724C1304 715 1316 715 1316 724Z" fill="#c0ccd8"/><rect x="1312" y="717" width="9" height="7" fill="#c0ccd8" stroke="#fff"/>
<path d="M1325 711L1329 708H1337L1341 711L1339 715L1337 714V723H1329V714L1327 715Z" fill="#1a78c8"/>
<path d="M1347 722L1354 714C1352 709 1357 706 1361 708L1358 711L1360 713L1362 710C1364 714 1360 718 1356 717L1350 724Z" fill="#1a78c8"/>

<!-- taskbar icons -->
<path d="M16 742L23 741V748H16ZM24 741L32 740V748H24ZM16 749H23V756L16 755ZM24 749H32V757L24 756Z" fill="#fff"/>
<circle cx="68" cy="748" r="9" stroke="#fff" stroke-width="2.500"/>
<rect x="368.500" y="741" width="5" height="9" rx="2.500" stroke="#999"/><path d="M366 747C366 753 376 753 376 747M371 752V755M368 755.500H374" stroke="#999"/>
<rect x="408" y="738" width="10" height="10" rx="5" fill="#dfe3e3"/><rect x="419" y="738" width="10" height="10" rx="5" fill="#dfe3e3"/><rect x="408" y="749" width="10" height="10" rx="5" fill="#dfe3e3"/><rect x="419" y="749" width="10" height="10" rx="5" fill="#dfe3e3"/><path d="M413 743L418 748L423 754M424 743L418 748L412 754" stroke="#05131b" stroke-width="1"/>
<circle cx="467" cy="748" r="8" stroke="#ccc" stroke-width="1.500"/><path d="M473 745C469 741 463 744 464 749C465 752 470 752 471 749" stroke="#ccc" stroke-width="1.500"/>
<path d="M478 732C474 732 475 739 472 743H484C481 739 482 732 478 732Z" fill="#d49a08"/>
<path d="M500.500 738V758" stroke="#2b3a42"/>
<path d="M550 750H538C538 755 545 756 550 754V757C542 760 533 756 534 748C534 741 540 737 546 738C551 739 552 745 551 750M538 746H547C547 741 539 741 538 746Z" fill="#1c86e0"/>
<path d="M586 738L589 734H592L594 738" stroke="#fff"/><path d="M580 738H598L597 758L580 755Z" fill="#fff"/><path d="M585 744H588V747H585ZM590 744H593V747H590ZM585 749H588V752H585ZM590 749H593V752H590Z" fill="#05131b"/>
<path d="M628 739H636L638 741H649V758H628Z" fill="#f5d77c"/><path d="M628 744H649" stroke="#e8c050"/><path d="M634 758V751H644V758Z" fill="#3aa0e0"/>
<path d="M680 741C686 736 695 738 698 740L691 743L695 750C694 757 686 759 681 755C676 750 677 745 680 741Z" fill="#3a8ae0"/><path d="M682 752L692 746L694 752L686 757Z" fill="#e85a7a"/>
<path d="M729 741C735 736 744 738 748 740L741 743L745 750C744 757 736 759 731 755C726 750 726 745 729 741Z" fill="#2a8ae8"/><path d="M735 747C738 743 742 746 739 750" stroke="#cfe8ff" stroke-width="2"/>
<circle cx="786" cy="748" r="10" fill="#7ac820" stroke="#e8f4e0"/><path d="M780 747H792M780 750H792M783 744L786 741L789 744" stroke="#fff" stroke-width="1.500"/>
<rect x="824" y="737" width="23" height="23" rx="3" fill="#1590e8"/><path d="M835.500 741V756M828 749H843M835.500 742C839 742 839 747 835.500 747M829 751C830 754 834 754 835.500 752" stroke="#fff" stroke-width="2"/>
<path d="M1093 752L1098 747L1103 752" stroke="#ddd"/>
<rect x="1117" y="745" width="11" height="9" fill="#ddd" stroke="#ddd"/><path d="M1114 744V750M1117 746H1113M1117 750H1113" stroke="#ddd"/>
<path d="M1141 756C1142 750 1146 746 1152 744M1144 756C1145 752 1148 749 1152 748M1147 756C1148 754 1150 752 1152 752" stroke="#bbb" stroke-width="1.300"/>
<path d="M1163 747H1166L1170 743V755L1166 751H1163ZM1172 746C1174 748 1174 751 1172 753M1175 744C1178 747 1178 752 1175 755" stroke="#ddd"/>
<path d="M1214 743L1229 740L1231 754L1217 757Z" fill="#f0531c"/><path d="M1226 745C1221 743 1217 745 1219 747C1221 749 1227 748 1226 751C1225 753 1221 753 1218 752" stroke="#fff" stroke-width="2"/>
<path d="M1325 740H1341V753H1325Z" fill="#fff"/><path d="M1327 744H1339M1327 747H1339M1327 750H1335" stroke="#05131b"/>
<circle cx="1340" cy="755" r="9.500" fill="#2a2a2a" stroke="#666"/>
</svg>

<i style="left:117px;top:-3px;color:#fff;font-size:12px;height:16px;line-height:16px;font-weight:bold">64</i>
<i style="left:110px;top:493px;background:#ffe600;color:#2a2a6a;font:bold 8px/9px 'Liberation Sans',sans-serif;height:9px;padding:0 1px">NEW</i>
<i style="left:1333px;top:747px;color:#fff;font-size:12px;font-weight:bold">15</i>
</body></html>
